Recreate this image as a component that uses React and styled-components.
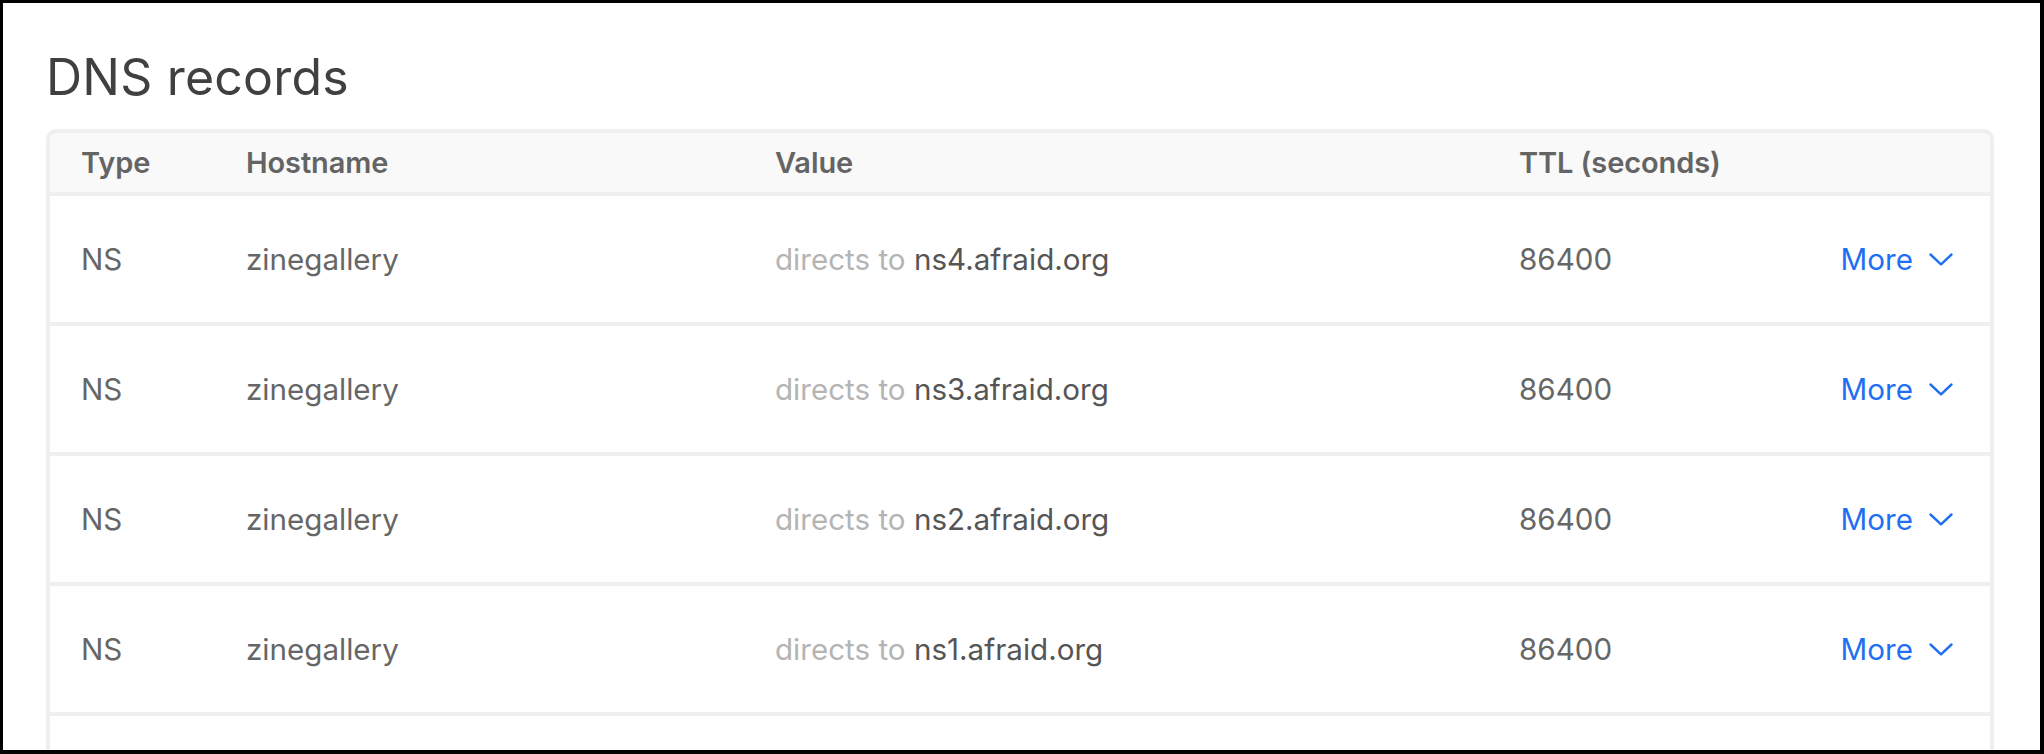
import React from "react";
import styled, { createGlobalStyle } from "styled-components";

const GlobalStyle = createGlobalStyle`
  html, body {
    margin: 0;
    padding: 0;
    background: #ffffff;
  }
  body {
    font-family: Inter, "Liberation Sans", sans-serif;
    -webkit-font-smoothing: antialiased;
  }
  * { box-sizing: border-box; }
`;

const Frame = styled.div`
  height: 754px;
  overflow: hidden;
  border-style: solid;
  border-color: #000;
  border-width: 3px 4px 4px 3px;
  padding: 44px 46px 0 43px;
  background: #fff;
`;

const Title = styled.h1`
  margin: 0 0 22px 0;
  font-size: 50px;
  line-height: 60px;
  font-weight: 400;
  color: #404040;
  letter-spacing: 0.2px;
`;

const Card = styled.div`
  border: 4px solid #efefef;
  border-radius: 10px 10px 0 0;
  overflow: hidden;
`;

const GridRow = styled.div`
  display: grid;
  grid-template-columns: 165px 529px 744px 1fr auto;
  align-items: center;
  padding: 0 37px 0 31px;
  height: ${(p) => (p.$header ? "63px" : "130px")};
  background: ${(p) => (p.$header ? "#f9f9f9" : "#fff")};
  border-bottom: 4px solid #efefef;
`;

const HeadCell = styled.div`
  font-size: 29px;
  font-weight: 600;
  color: #646464;
  white-space: nowrap;
  letter-spacing: -0.1px;
`;

const Cell = styled.div`
  font-size: 29.6px;
  font-weight: 400;
  color: ${(p) => (p.$strong ? "#555" : "#666")};
  white-space: nowrap;
`;

const Muted = styled.span`
  color: #b4b4b4;
`;

const MoreButton = styled.button`
  display: flex;
  align-items: center;
  gap: 16px;
  border: 0;
  background: none;
  padding: 0;
  font-family: inherit;
  font-size: 29.6px;
  color: #1f6ff2;
  cursor: pointer;
`;

const Chevron = () => (
  <svg width="24" height="13" viewBox="0 0 24 13" fill="none" aria-hidden="true">
    <polyline
      points="1.5,1.5 12,11.3 22.5,1.5"
      stroke="currentColor"
      strokeWidth="2.4"
      strokeLinecap="round"
      strokeLinejoin="round"
    />
  </svg>
);

const records = [
  { type: "NS", host: "zinegallery", value: "ns4.afraid.org", ttl: "86400" },
  { type: "NS", host: "zinegallery", value: "ns3.afraid.org", ttl: "86400" },
  { type: "NS", host: "zinegallery", value: "ns2.afraid.org", ttl: "86400" },
  { type: "NS", host: "zinegallery", value: "ns1.afraid.org", ttl: "86400" },
];

export default function App() {
  return (
    <>
      <GlobalStyle />
      <Frame>
        <Title>DNS records</Title>
        <Card>
          <GridRow $header>
            <HeadCell>Type</HeadCell>
            <HeadCell>Hostname</HeadCell>
            <HeadCell>Value</HeadCell>
            <HeadCell>TTL (seconds)</HeadCell>
            <div />
          </GridRow>
          {records.map((r, i) => (
            <GridRow key={i}>
              <Cell>{r.type}</Cell>
              <Cell>{r.host}</Cell>
              <Cell $strong>
                <Muted>directs to </Muted>
                {r.value}
              </Cell>
              <Cell>{r.ttl}</Cell>
              <MoreButton>
                More
                <Chevron />
              </MoreButton>
            </GridRow>
          ))}
          <GridRow>
            <Cell />
          </GridRow>
        </Card>
      </Frame>
    </>
  );
}
